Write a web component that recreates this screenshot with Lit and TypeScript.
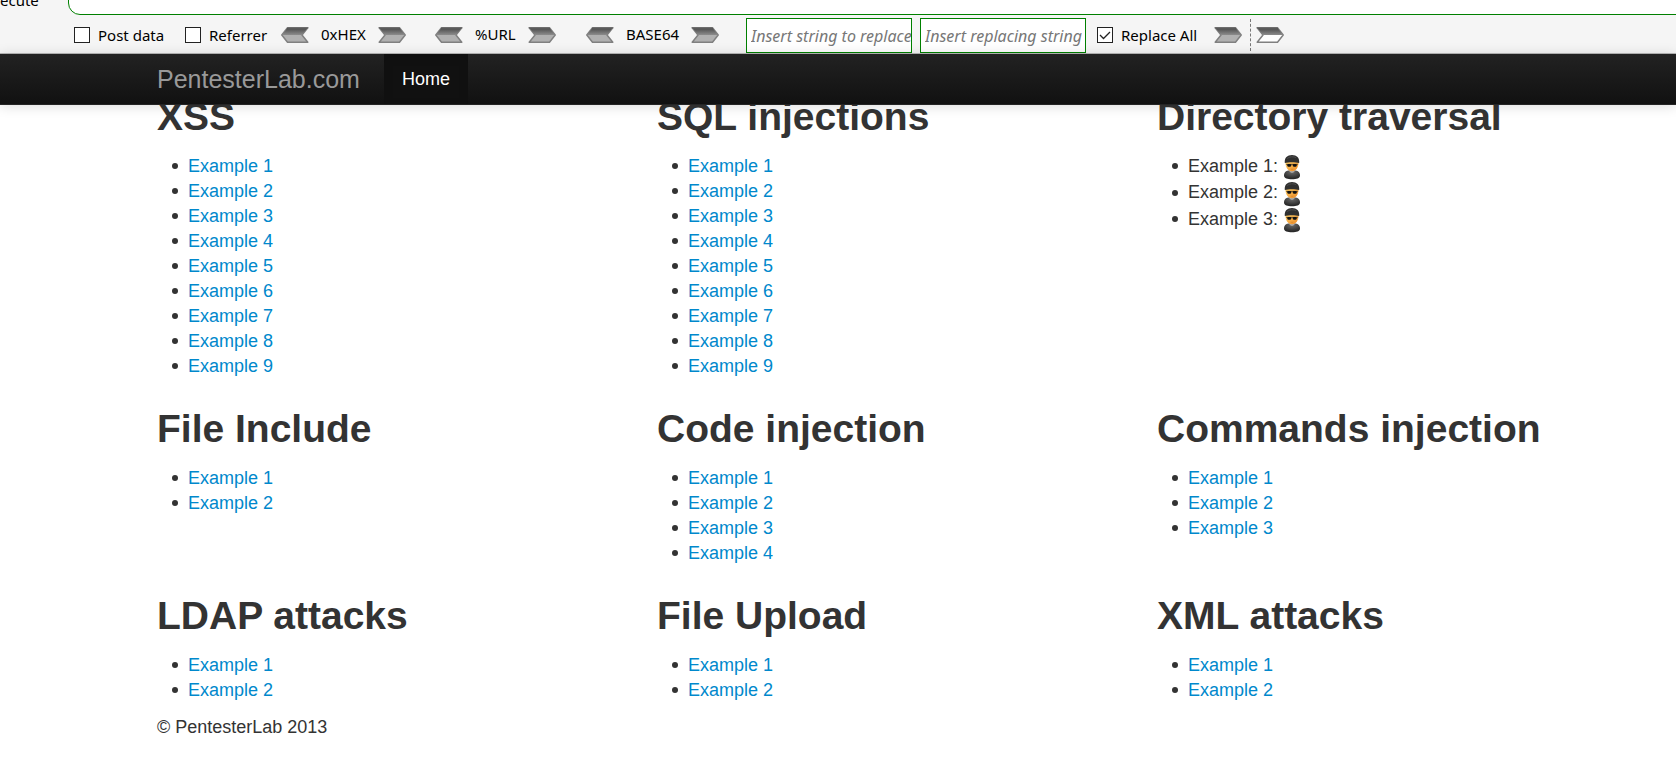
import { LitElement, html, svg, css } from "lit";
import { customElement, property } from "lit/decorators.js";

interface Topic {
  title: string;
  count: number;
  solved?: boolean;
}

const TOPICS: Topic[] = [
  { title: "XSS", count: 9 },
  { title: "SQL injections", count: 9 },
  { title: "Directory traversal", count: 3, solved: true },
  { title: "File Include", count: 2 },
  { title: "Code injection", count: 4 },
  { title: "Commands injection", count: 3 },
  { title: "LDAP attacks", count: 2 },
  { title: "File Upload", count: 2 },
  { title: "XML attacks", count: 2 },
];

@customElement("arrow-button")
class ArrowButton extends LitElement {
  @property() direction = "right";
  @property() label = "";
  @property({ type: Boolean }) hollow = false;

  static styles = css`
    :host { display: block; flex: none; }
    button { display: block; padding: 0; border: 0; background: none; }
    svg { display: block; }
  `;

  render() {
    const flip = this.direction === "left" ? "translate(28 0) scale(-1 1)" : "";
    const low = this.hollow ? "#fff" : "#b0b0b0";
    return html`<button type="button" aria-label=${this.label}>
      <svg width="28" height="16" viewBox="0 0 28 16">
        <defs>
          <linearGradient id="top" x1="0" y1="0" x2="0" y2="1">
            <stop offset="0" stop-color="#484848" />
            <stop offset="1" stop-color="#8c8c8c" />
          </linearGradient>
        </defs>
        ${svg`<g transform=${flip}>
          <path d="M1.2 0.8H21.5L27.2 8L21.5 15.2H1.2L7 8Z" fill=${low} stroke="#808080" stroke-width="1.5" stroke-linejoin="round" />
          <path d="M1.2 0.8H21.5L26.8 8H7.2Z" fill="url(#top)" />
          <path d="M0.8 0.8H21.5" stroke="#6c6c6c" stroke-width="1.2" />
        </g>`}
      </svg>
    </button>`;
  }
}

@customElement("hacker-icon")
class HackerIcon extends LitElement {
  static styles = css`
    :host { display: inline-block; vertical-align: middle; }
    svg { display: block; }
  `;

  render() {
    return html`<svg width="18" height="26" viewBox="0 0 18 26" role="img" aria-label="Solved">
      <defs>
        <linearGradient id="face" x1="0" y1="0" x2="1" y2="1">
          <stop offset="0" stop-color="#ffd06a" />
          <stop offset="1" stop-color="#ec8620" />
        </linearGradient>
        <radialGradient id="coat" cx=".5" cy=".2" r=".7">
          <stop offset="0" stop-color="#6b6b6b" />
          <stop offset="1" stop-color="#292929" />
        </radialGradient>
      </defs>
      <path d="M1 21.5C1 17.5 4 16.3 9 16.3S17 17.5 17 21.5C17 24.3 13.5 25.3 9 25.3S1 24.3 1 21.5Z" fill="url(#coat)" />
      <path d="M6 15.5H12L11.3 18L9 19L6.7 18Z" fill="#a9a9a9" />
      <path d="M2.4 8H15.6C15.6 13.5 13 17.2 9 17.2S2.4 13.5 2.4 8Z" fill="url(#face)" />
      <path d="M1.8 8.9C1.3 3.7 4.3 1 9 1S16.7 3.7 16.2 8.9C12.5 7.9 5.5 7.9 1.8 8.9Z" fill="#303030" />
      <path d="M4.2 4.6C5.8 2.6 11 2.2 13 3.6" fill="none" stroke="#4c4c4c" />
      <path d="M3.2 10.4H14.8" stroke="#222" stroke-width=".7" />
      <rect x="4.2" y="10" width="4.1" height="2.7" rx="1.1" fill="#111" />
      <rect x="9.7" y="10" width="4.1" height="2.7" rx="1.1" fill="#111" />
      <path d="M7.6 15Q9 15.7 10.4 15" fill="none" stroke="#c97a2a" stroke-width=".6" />
    </svg>`;
  }
}

@customElement("tool-bar")
class ToolBar extends LitElement {
  static styles = css`
    :host {
      display: block;
      overflow: hidden;
      background: #f5f5f5;
      border-bottom: 1px solid #b8b8b8;
      font: 15px/20px "Noto Sans", sans-serif;
      color: #000;
    }
    .request { display: flex; align-items: flex-end; height: 15px; overflow: hidden; }
    .execute {
      flex: none;
      width: 68px;
      height: 20px;
      margin-bottom: 5px;
      padding: 0;
      border: 0;
      background: none;
      font: inherit;
      text-align: left;
    }
    .body {
      flex: 1;
      box-sizing: border-box;
      height: 40px;
      margin-right: -16px;
      border: 1px solid #008000;
      border-radius: 12px;
      background: #fff;
      resize: none;
      outline: 0;
    }
    .tools {
      display: grid;
      grid-template-columns: 111px 96px 154px 151px 160px 174px 177px 117px 42px 28px;
      align-items: center;
      box-sizing: border-box;
      height: 38px;
      padding: 2px 0 0 74px;
    }
    .check { display: flex; align-items: center; gap: 8px; white-space: nowrap; }
    .check input {
      appearance: none;
      box-sizing: border-box;
      flex: none;
      width: 16px;
      height: 16px;
      margin: 0;
      border: 1px solid #222;
      background: #fff;
    }
    .check input:checked {
      background: #fff url("data:image/svg+xml,%3Csvg xmlns='http://www.w3.org/2000/svg' viewBox='0 0 14 14'%3E%3Cpath d='M2 7l3.5 3.5L12 4' fill='none' stroke='%23222' stroke-width='1.3'/%3E%3C/svg%3E") center / 14px no-repeat;
    }
    .codec { display: flex; align-items: center; gap: 12px; }
    .codec span { padding-bottom: 2px; }
    .field {
      box-sizing: border-box;
      align-self: end;
      width: 166px;
      height: 35px;
      padding: 0 0 0 4px;
      border: 1px solid #008000;
      border-radius: 0;
      background: #fff;
      font: inherit;
      font-size: 16px;
      font-style: italic;
      outline: 0;
    }
    .field::placeholder { color: #777; opacity: 1; }
    .split {
      display: flex;
      align-items: center;
      align-self: stretch;
    }
    .split::after {
      content: "";
      height: 32px;
      margin-left: 8px;
      border-left: 1px dashed #777;
    }
  `;

  private codec(name: string) {
    return html`<div class="codec">
      <arrow-button direction="left" label="Decode ${name}"></arrow-button>
      <span>${name}</span>
      <arrow-button label="Encode ${name}"></arrow-button>
    </div>`;
  }

  render() {
    return html`
      <div class="request">
        <button class="execute" type="button">ecute</button>
        <textarea class="body" aria-label="Request URL"></textarea>
      </div>
      <div class="tools">
        <label class="check"><input type="checkbox" />Post data</label>
        <label class="check"><input type="checkbox" />Referrer</label>
        ${this.codec("0xHEX")} ${this.codec("%URL")} ${this.codec("BASE64")}
        <input class="field" type="text" aria-label="String to replace" placeholder="Insert string to replace" />
        <input class="field" type="text" aria-label="Replacing string" placeholder="Insert replacing string" />
        <label class="check"><input type="checkbox" checked />Replace All</label>
        <div class="split"><arrow-button label="Replace"></arrow-button></div>
        <arrow-button hollow label="Replace in body"></arrow-button>
      </div>
    `;
  }
}

@customElement("app-root")
class AppRoot extends LitElement {
  static styles = css`
    :host {
      display: block;
      min-height: 100vh;
      background: #fff;
      color: #333;
      font: 18px/25px "Liberation Sans", Arial, sans-serif;
    }
    a { color: #0088cc; text-decoration: none; }
    .navbar {
      position: relative;
      z-index: 1;
      display: flex;
      box-sizing: border-box;
      height: 51px;
      padding-left: 157px;
      border-bottom: 1px solid #252525;
      background: linear-gradient(#222, #111);
      box-shadow: 0 1px 12px rgba(0, 0, 0, 0.15);
    }
    .brand {
      margin-right: 24px;
      color: #999;
      font-size: 25px;
      line-height: 50px;
    }
    .tab {
      padding: 0 18px;
      background: #111;
      box-shadow: inset 0 3px 10px rgba(0, 0, 0, 0.125);
      color: #fff;
      line-height: 50px;
    }
    .page { margin-top: -26px; padding: 0 57px 0 157px; }
    .topics { display: grid; grid-template-columns: repeat(3, minmax(0, 1fr)); column-gap: 38px; }
    h1 { margin: 13px 0 12px; font-size: 39px; line-height: 50px; white-space: nowrap; }
    ul { margin: 0 0 12px; padding: 0 0 0 31px; list-style: none; }
    li::before {
      content: "";
      display: inline-block;
      width: 6px;
      height: 6px;
      margin: 0 10px 2px -16px;
      border-radius: 50%;
      background: #333;
      vertical-align: middle;
    }
    footer p { margin: 0; }
  `;

  private item(topic: Topic, n: number) {
    return topic.solved
      ? html`<li>Example ${n}: <hacker-icon></hacker-icon></li>`
      : html`<li><a href="#">Example ${n}</a></li>`;
  }

  render() {
    return html`
      <tool-bar></tool-bar>
      <nav class="navbar">
        <a class="brand" href="#">PentesterLab.com</a>
        <a class="tab" href="#">Home</a>
      </nav>
      <main class="page">
        <div class="topics">
          ${TOPICS.map(
            (topic) => html`<section>
              <h1>${topic.title}</h1>
              <ul>
                ${Array.from({ length: topic.count }, (_, i) => this.item(topic, i + 1))}
              </ul>
            </section>`
          )}
        </div>
        <footer><p>© PentesterLab 2013</p></footer>
      </main>
    `;
  }
}
